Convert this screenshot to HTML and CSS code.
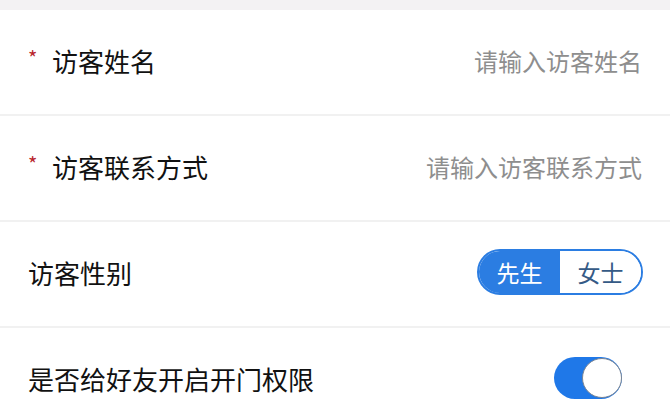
FILE: index.html
```
<!DOCTYPE html>
<html lang="zh-CN">
<head>
    <meta charset="UTF-8">
    <meta name="viewport" content="width=device-width, initial-scale=1.0">
    <title>访客信息</title>
    <link rel="stylesheet" href="styles.css">
</head>
<body>
    <div class="top-bar"></div>
    <div class="form">
        <div class="row">
            <label class="label required">访客姓名</label>
            <input class="field" type="text" placeholder="请输入访客姓名">
        </div>
        <div class="row">
            <label class="label required">访客联系方式</label>
            <input class="field" type="text" placeholder="请输入访客联系方式">
        </div>
        <div class="row">
            <span class="label">访客性别</span>
            <div class="segment">
                <button class="seg-btn active">先生</button>
                <button class="seg-btn">女士</button>
            </div>
        </div>
        <div class="row">
            <span class="label">是否给好友开启开门权限</span>
            <div class="switch on">
                <div class="knob"></div>
            </div>
        </div>
    </div>
</body>
</html>
```

FILE: styles.css
```
body {
    margin: 0;
    font-family: "Noto Sans CJK SC", "Noto Sans", sans-serif;
    background-color: #fff;
    overflow: hidden;
}

.top-bar {
    height: 10px;
    background-color: #f3f2f3;
}

.row {
    height: 100px;
    padding: 0 28px 4px;
    border-bottom: 2px solid #f1f1f1;
    display: flex;
    align-items: center;
    justify-content: space-between;
}

.label {
    font-size: 26px;
    color: #111;
    display: flex;
    align-items: center;
    white-space: nowrap;
}

.required::before {
    content: "*";
    color: #b8262c;
    font-size: 20px;
    width: 24px;
    margin-top: -6px;
}

.field {
    border: none;
    outline: none;
    text-align: right;
    font-family: inherit;
    font-size: 24px;
    width: 300px;
    padding: 0;
    color: #333;
    background: transparent;
}

.field::placeholder {
    color: #8e8e8e;
}

/* 性别选择 */
.segment {
    display: flex;
    height: 46px;
    width: 166px;
    border: 2px solid #2b7de2;
    border-radius: 23px;
    box-sizing: border-box;
    overflow: hidden;
    margin-right: -1px;
}

.seg-btn {
    flex: 1;
    border: none;
    background: #fff;
    font-family: inherit;
    font-size: 23px;
    color: #355a86;
    padding: 0;
    cursor: pointer;
}

.seg-btn.active {
    background-color: #2b7de2;
    color: #fff;
}

/* 开关 */
.switch {
    width: 68px;
    height: 42px;
    border-radius: 21px;
    background-color: #1f78e8;
    display: flex;
    align-items: center;
    justify-content: flex-end;
    margin-right: 20px;
}

.knob {
    width: 40px;
    height: 40px;
    border-radius: 50%;
    background: #fff;
    border: 1.5px solid #7a8594;
    box-sizing: border-box;
}
```
